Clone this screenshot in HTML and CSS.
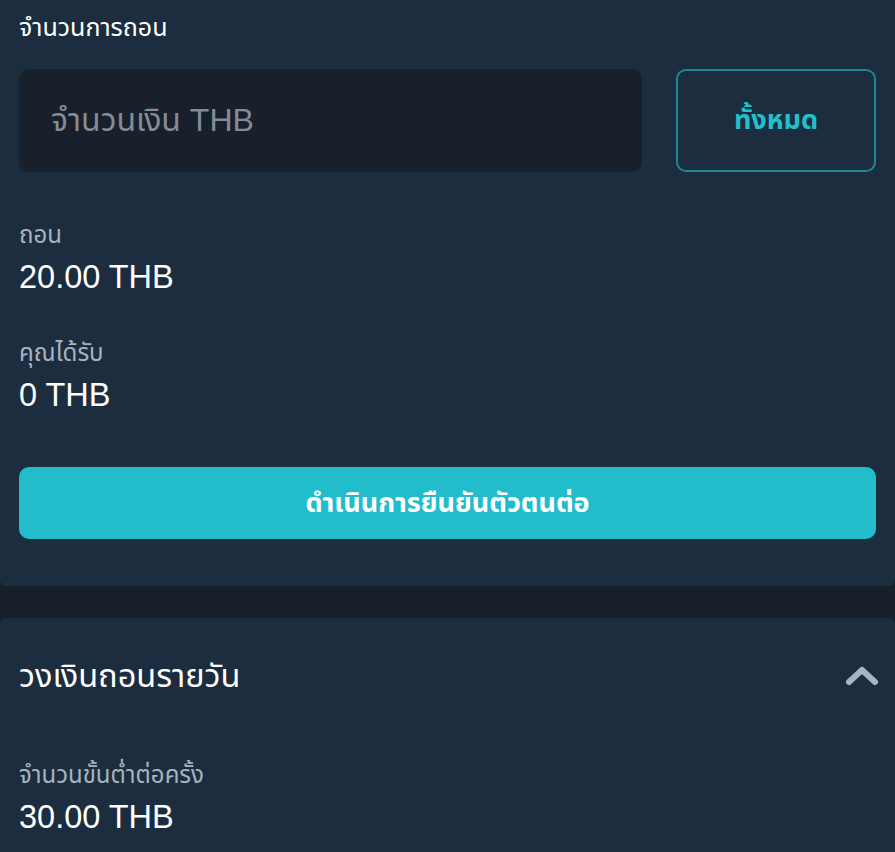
FILE: index.html
```html
<!DOCTYPE html>
<html lang="th">
<head>
    <meta charset="UTF-8">
    <meta name="viewport" content="width=device-width, initial-scale=1.0">
    <title>ถอนเงิน</title>
    <link rel="stylesheet" href="styles.css">
</head>
<body>
    <div class="card withdraw">
        <div class="label-main">จำนวนการถอน</div>
        <div class="amount-row">
            <input type="text" class="amount-input" placeholder="จำนวนเงิน THB">
            <button class="btn-all">ทั้งหมด</button>
        </div>

        <div class="info">
            <div class="info-label">ถอน</div>
            <div class="info-value">20.00 THB</div>
        </div>
        <div class="info">
            <div class="info-label">คุณได้รับ</div>
            <div class="info-value">0 THB</div>
        </div>

        <button class="btn-primary">ดำเนินการยืนยันตัวตนต่อ</button>
    </div>

    <div class="card limits">
        <div class="limits-head">
            <h2>วงเงินถอนรายวัน</h2>
            <svg class="chevron" width="34" height="20" viewBox="0 0 34 20">
                <path d="M4 16 L17 4 L30 16" fill="none" stroke="#a9b4c1" stroke-width="6" stroke-linecap="round" stroke-linejoin="round"/>
            </svg>
        </div>
        <div class="info">
            <div class="info-label">จำนวนขั้นต่ำต่อครั้ง</div>
            <div class="info-value">30.00 THB</div>
        </div>
    </div>
</body>
</html>
```

FILE: styles.css
```css
body {
    margin: 0;
    background-color: #171f2a;
    font-family: "Liberation Sans", "Noto Sans", "Noto Sans Thai", sans-serif;
    color: #ffffff;
}
.card {
    background-color: #1c2d40;
    padding: 0 19px;
}
.withdraw {
    padding-top: 12px;
    padding-bottom: 47px;
    border-radius: 0 0 6px 6px;
}
.limits {
    margin-top: 32px;
    padding-top: 30px;
    padding-bottom: 30px;
    border-radius: 6px 6px 0 0;
}
.label-main {
    font-size: 25px;
    line-height: 30px;
    height: 30px;
}
.amount-row {
    display: flex;
    gap: 34px;
    margin-top: 27px;
}
.amount-input {
    flex: 1;
    min-width: 0;
    height: 103px;
    box-sizing: border-box;
    background-color: #17202b;
    border: none;
    border-radius: 10px;
    padding: 0 32px;
    font-family: inherit;
    font-size: 32px;
    color: #ffffff;
    outline: none;
}
.amount-input::placeholder {
    color: #868c95;
}
.btn-all {
    width: 200px;
    height: 103px;
    background: transparent;
    border: 2px solid #1f8793;
    border-radius: 10px;
    color: #22bfcc;
    font-family: inherit;
    font-size: 27px;
    font-weight: bold;
}
.info {
    margin-top: 49px;
}
.info-label {
    font-size: 24px;
    line-height: 28px;
    height: 28px;
    color: #a8b3bf;
}
.info-value {
    font-size: 32.5px;
    line-height: 40px;
    height: 40px;
    margin-top: 8px;
}
.withdraw .info + .info {
    margin-top: 42px;
}
.btn-primary {
    display: block;
    width: 100%;
    height: 72px;
    margin-top: 52px;
    background-color: #21bdca;
    border: none;
    border-radius: 10px;
    color: #ffffff;
    font-family: inherit;
    font-size: 27px;
    font-weight: bold;
}
.limits-head {
    display: flex;
    justify-content: space-between;
    align-items: center;
    height: 56px;
}
.limits-head h2 {
    margin: 0;
    font-size: 32.5px;
    font-weight: normal;
    line-height: 56px;
}
.chevron {
    margin-right: -3px;
}
.limits .info {
    margin-top: 57px;
}
```
